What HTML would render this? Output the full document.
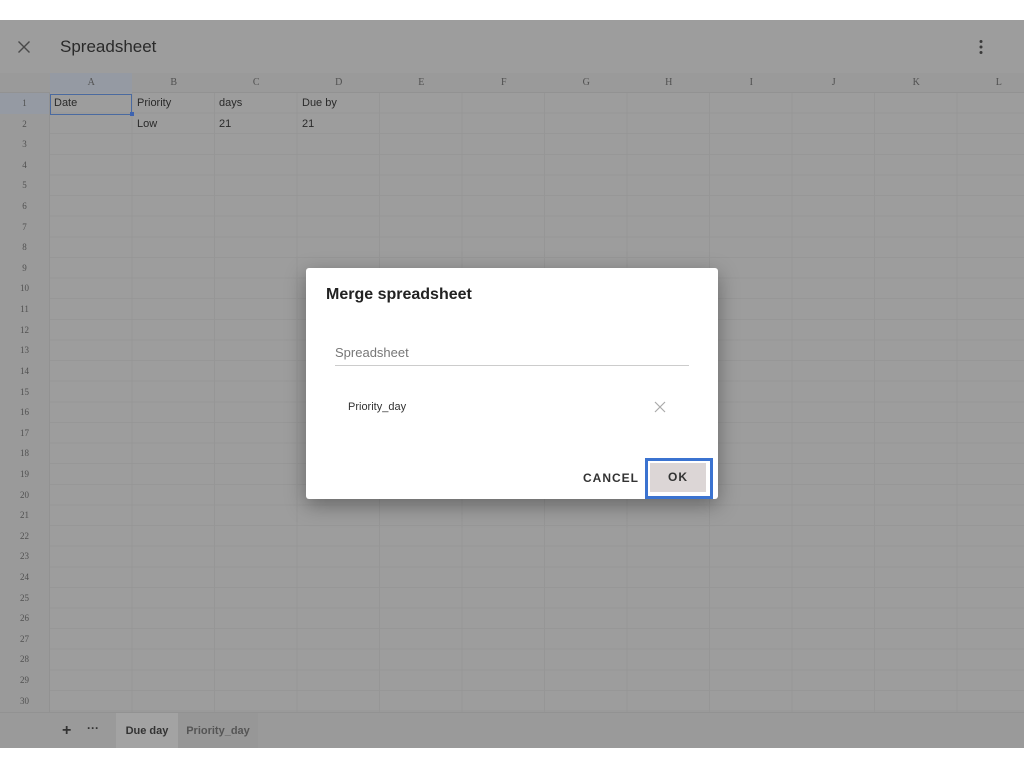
<!DOCTYPE html>
<html><head><meta charset="utf-8"><style>
*{margin:0;padding:0;box-sizing:border-box}
body{width:1024px;height:768px;background:#fff;position:relative;overflow:hidden;font-family:"Liberation Sans",sans-serif}
#app{position:absolute;left:0;top:20px;width:1024px;height:728px;background:#9d9d9d;overflow:hidden}
.title{position:absolute;left:60px;top:17px;font-size:17px;color:#2a2a2a}
.x{position:absolute;left:16px;top:19px}
.dots{position:absolute;left:978px;top:19px}
.colh{position:absolute;left:0;top:53px;width:1024px;height:20px;background:#9a9a9a;border-bottom:1px solid #929292}
.colh span{position:absolute;top:4px;font-family:"Liberation Serif",serif;font-size:10px;color:#505050;width:82.5px;text-align:center}
.grid{position:absolute;left:50px;top:73px;width:974px;height:619px;
background-image:repeating-linear-gradient(90deg,transparent 0 81.5px,#969696 81.5px 82.5px),repeating-linear-gradient(180deg,transparent 0 19.62px,#979797 19.62px 20.62px)}
.rowh{position:absolute;left:0;top:73px;width:50px;height:619px;background:#9a9a9a;border-right:1px solid #929292}
.rowh div{height:20.62px;line-height:20.62px;text-align:center;font-family:"Liberation Serif",serif;font-size:9px;color:#505050}
.cell{position:absolute;font-size:11px;color:#2a2a2a}
.tabs{position:absolute;left:0;top:692px;width:1024px;height:36px;background:#9a9a9a;border-top:1px solid #929292}
.tab{position:absolute;top:0;height:36px;line-height:36px;font-size:11px;font-weight:bold;text-align:center;white-space:nowrap}
.dlg{position:absolute;left:306px;top:268px;width:412px;height:231px;background:#fff;border-radius:3px;box-shadow:0 6px 20px rgba(0,0,0,.35)}
</style></head><body>
<div id="app">
<svg class="x" width="16" height="16" viewBox="0 0 16 16"><path d="M2.5 2.5L13.5 13.5M13.5 2.5L2.5 13.5" stroke="#4a4a4a" stroke-width="1.4"/></svg>
<div class="title">Spreadsheet</div>
<svg class="dots" width="6" height="16" viewBox="0 0 6 16"><circle cx="3" cy="2.5" r="1.5" fill="#3a3a3a"/><circle cx="3" cy="8" r="1.5" fill="#3a3a3a"/><circle cx="3" cy="13.5" r="1.5" fill="#3a3a3a"/></svg>
<div class="colh">
<div style="position:absolute;left:50px;top:0;width:82px;height:20px;background:#959aa3"></div>
<span style="left:50px">A</span><span style="left:132.5px">B</span><span style="left:215px">C</span><span style="left:297.5px">D</span><span style="left:380px">E</span><span style="left:462.5px">F</span><span style="left:545px">G</span><span style="left:627.5px">H</span><span style="left:710px">I</span><span style="left:792.5px">J</span><span style="left:875px">K</span><span style="left:957.5px">L</span>
</div>
<div class="grid"></div>
<div class="rowh"><div style="background:#959aa3">1</div><div>2</div><div>3</div><div>4</div><div>5</div><div>6</div><div>7</div><div>8</div><div>9</div><div>10</div><div>11</div><div>12</div><div>13</div><div>14</div><div>15</div><div>16</div><div>17</div><div>18</div><div>19</div><div>20</div><div>21</div><div>22</div><div>23</div><div>24</div><div>25</div><div>26</div><div>27</div><div>28</div><div>29</div><div>30</div></div>
<div style="position:absolute;left:50px;top:74px;width:82px;height:21px;border:1.5px solid #4a6aa0"></div>
<div style="position:absolute;left:130px;top:92px;width:4px;height:4px;background:#3d63b0"></div>
<div class="cell" style="left:54px;top:77px">Date</div>
<div class="cell" style="left:137px;top:77px">Priority</div>
<div class="cell" style="left:219px;top:77px">days</div>
<div class="cell" style="left:302px;top:77px">Due by</div>
<div class="cell" style="left:137px;top:98px">Low</div>
<div class="cell" style="left:219px;top:98px">21</div>
<div class="cell" style="left:302px;top:98px">21</div>
<div class="tabs">
<div style="position:absolute;left:62px;top:9px;font-size:16px;color:#333;font-weight:bold">+</div>
<div style="position:absolute;left:87px;top:8px;font-size:12px;color:#333;font-weight:bold">···</div>
<div class="tab" style="left:116px;background:#a3a3a3;color:#333;width:62px">Due day</div>
<div class="tab" style="left:178px;background:#979797;color:#555;width:80px">Priority_day</div>
</div>
</div>
<div class="dlg">
<div style="position:absolute;left:20px;top:18px;font-size:16px;color:#222;font-weight:bold">Merge spreadsheet</div>
<div style="position:absolute;left:29px;top:77px;font-size:13px;color:#777">Spreadsheet</div>
<div style="position:absolute;left:29px;top:97px;width:354px;height:1px;background:#ccc"></div>
<div style="position:absolute;left:42px;top:133px;font-size:11px;color:#333">Priority_day</div>
<svg style="position:absolute;left:348px;top:133px" width="12" height="12" viewBox="0 0 12 12"><path d="M1 1L11 11M11 1L1 11" stroke="#aaa" stroke-width="1.2"/></svg>
<div style="position:absolute;left:277px;top:203px;font-size:12px;color:#333;letter-spacing:1px;font-weight:bold">CANCEL</div>
<div style="position:absolute;left:339px;top:190px;width:68px;height:41px;border:3px solid #3b73d0;background:#fff"></div>
<div style="position:absolute;left:344px;top:195px;width:56px;height:29px;background:#dcd6d6;text-align:center;line-height:29px;font-size:12px;color:#333;letter-spacing:1px;font-weight:bold">OK</div>
</div>
</body></html>
